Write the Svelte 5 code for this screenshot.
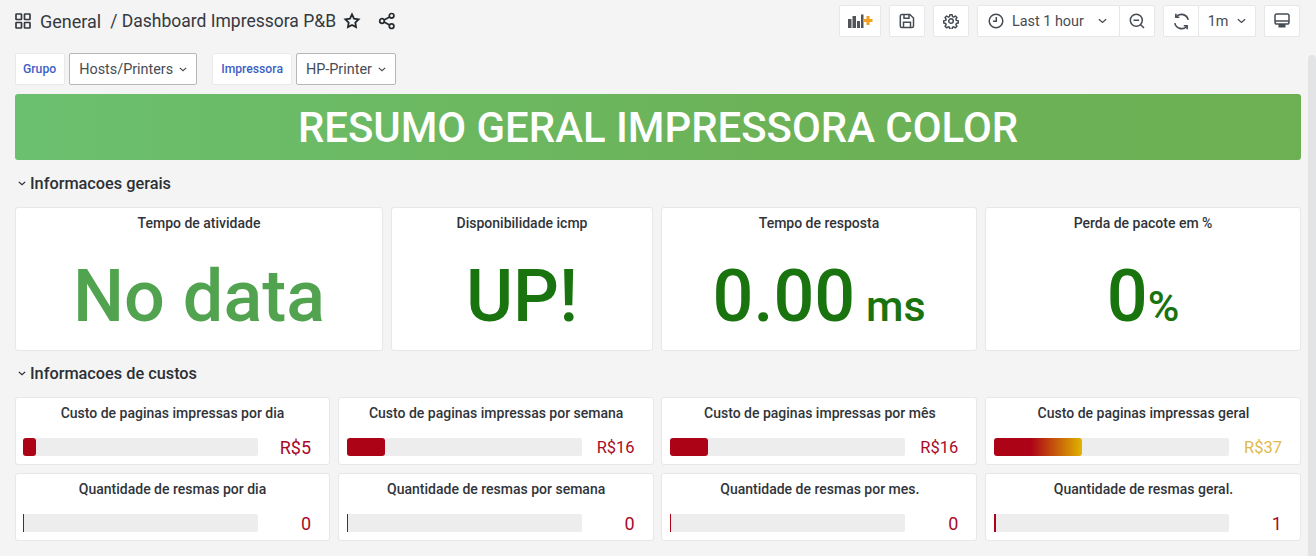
<script>
  const stats = [
    { title: 'Tempo de atividade', value: 'No data', color: '#52a34f' },
    { title: 'Disponibilidade icmp', value: 'UP!', color: '#19730e' },
    { title: 'Tempo de resposta', value: '0.00', unit: ' ms', color: '#19730e' },
    { title: 'Perda de pacote em %', value: '0', unit: '%', color: '#19730e' }
  ];

  const red = '#ad0317';
  const gauges = [
    { title: 'Custo de paginas impressas por dia', value: 'R$5', width: 13, color: red, size: 18 },
    { title: 'Custo de paginas impressas por semana', value: 'R$16', width: 38, color: red, size: 16.500 },
    { title: 'Custo de paginas impressas por mês', value: 'R$16', width: 38, color: red, size: 16.500 },
    { title: 'Custo de paginas impressas geral', value: 'R$37', width: 88, color: 'linear-gradient(90deg, #ad0317 0%, #ad0317 42%, #e0b400 100%)', text: '#e0b94a', size: 16.500 },
    { title: 'Quantidade de resmas por dia', value: '0', width: 1, color: red, size: 18 },
    { title: 'Quantidade de resmas por semana', value: '0', width: 1, color: red, size: 18 },
    { title: 'Quantidade de resmas por mes.', value: '0', width: 1, color: red, size: 18 },
    { title: 'Quantidade de resmas geral.', value: '1', width: 2.500, color: red, size: 18 }
  ];
</script>

<div class="page">
  <header class="topbar">
    <div class="crumbs">
      <svg class="ico grid-ico" viewBox="0 0 16 16" width="16" height="16">
        <rect x="1" y="1" width="5.500" height="5.500" rx=".6" />
        <rect x="9.500" y="1" width="5.500" height="5.500" rx=".6" />
        <rect x="1" y="9.500" width="5.500" height="5.500" rx=".6" />
        <rect x="9.500" y="9.500" width="5.500" height="5.500" rx=".6" />
      </svg>
      <span class="folder">General</span>
      <span class="dash">/ Dashboard Impressora P&amp;B</span>
      <svg class="ico star" viewBox="0 0 24 24" width="18" height="18">
        <path d="M12 3.200l2.700 5.600 6.100.9-4.400 4.300 1 6.100-5.400-2.900-5.400 2.900 1-6.100-4.400-4.300 6.100-.9z" />
      </svg>
      <svg class="ico share" viewBox="0 0 18 18" width="18" height="18">
        <circle cx="13.600" cy="3.800" r="2.300" />
        <circle cx="4" cy="9" r="2.300" />
        <circle cx="13.600" cy="14.200" r="2.300" />
        <path d="M6 7.900l5.600-3M6 10.100l5.600 3" />
      </svg>
    </div>

    <div class="actions">
      <button class="btn add-panel" aria-label="Add panel">
        <svg viewBox="0 0 26 16" width="26" height="16">
          <g fill="#52545c">
            <rect x="1" y="6" width="3.500" height="9" />
            <rect x="5.500" y="3" width="3.500" height="12" />
            <rect x="10" y="8" width="3" height="7" />
            <rect x="14" y="1.500" width="2.500" height="13.500" />
          </g>
          <path d="M21 3v9M16.500 7.500h9" stroke="#f5a01e" stroke-width="3" fill="none" />
        </svg>
      </button>
      <button class="btn square" aria-label="Save">
        <svg class="ico" viewBox="0 0 16 16" width="16" height="16">
          <path d="M2.800 1.500h8l3.700 3.500v8a1.500 1.500 0 0 1-1.500 1.500H2.800a1.500 1.500 0 0 1-1.500-1.500V3a1.500 1.500 0 0 1 1.500-1.500z" />
          <path d="M5 1.800v3.400h5V1.800M4.500 14.300V9.300h7v5" />
        </svg>
      </button>
      <button class="btn square" aria-label="Settings">
        <svg class="ico gear" viewBox="0 0 24 24" width="16" height="16">
          <circle cx="12" cy="12" r="3.400" />
          <path d="M10.300 2.500h3.400l.6 2.900 1.700.7 2.500-1.600 2.400 2.400-1.600 2.500.7 1.700 2.900.6v3.400l-2.900.6-.7 1.700 1.600 2.500-2.400 2.400-2.500-1.600-1.700.7-.6 2.900h-3.400l-.6-2.900-1.700-.7-2.500 1.600-2.400-2.400 1.600-2.500-.7-1.700-2.900-.6v-3.400l2.900-.6.7-1.700-1.600-2.500 2.400-2.400 2.500 1.600 1.700-.7z" />
        </svg>
      </button>
      <div class="btn-group">
        <button class="btn range">
          <svg class="ico" viewBox="0 0 16 16" width="16" height="16">
            <circle cx="8" cy="8" r="6.800" />
            <path d="M8.300 4v4.300H5" />
          </svg>
          <span>Last 1 hour</span>
          <svg class="chev" viewBox="0 0 10 6" width="9" height="6"><path d="M1 1l4 3.600L9 1" /></svg>
        </button>
        <button class="btn square" aria-label="Zoom out">
          <svg class="ico" viewBox="0 0 16 16" width="16" height="16">
            <circle cx="7.300" cy="7.300" r="6" />
            <path d="M4.500 7.300h5.600M11.700 11.700l3.300 3.300" />
          </svg>
        </button>
      </div>
      <div class="btn-group">
        <button class="btn square" aria-label="Refresh">
          <svg class="ico" viewBox="0 0 16 16" width="17" height="17">
            <path d="M14.300 6.500A6.500 6.500 0 0 0 3 3.600M1.700 9.500A6.500 6.500 0 0 0 13 12.400" />
            <path d="M2.700 .8v3.200h3.200M13.300 15.200v-3.200h-3.200" />
          </svg>
        </button>
        <button class="btn interval">
          <span>1m</span>
          <svg class="chev" viewBox="0 0 10 6" width="9" height="6"><path d="M1 1l4 3.600L9 1" /></svg>
        </button>
      </div>
      <button class="btn square tv" aria-label="Cycle view mode">
        <svg class="ico" viewBox="0 0 16 16" width="16" height="16">
          <rect x="1" y="1" width="14" height="10" rx="1.800" />
          <path d="M1 8h14" />
          <rect class="stand" x="4.500" y="11" width="7" height="3.500" />
        </svg>
      </button>
    </div>
  </header>

  <div class="variables">
    <span class="var-label">Grupo</span>
    <button class="var-value">Hosts/Printers <svg class="chev" viewBox="0 0 10 6" width="8" height="5"><path d="M1 1l4 3.600L9 1" /></svg></button>
    <span class="var-label second">Impressora</span>
    <button class="var-value">HP-Printer <svg class="chev" viewBox="0 0 10 6" width="8" height="5"><path d="M1 1l4 3.600L9 1" /></svg></button>
  </div>

  <div class="banner">RESUMO GERAL IMPRESSORA COLOR</div>

  <div class="row-title first">
    <svg class="chev" viewBox="0 0 10 6" width="8" height="5"><path d="M1 1l4 3.600L9 1" /></svg>
    Informacoes gerais
  </div>

  <section class="stats">
    {#each stats as s}
      <article class="panel stat">
        <h3>{s.title}</h3>
        <div class="stat-value" style="color: {s.color}">{s.value}{#if s.unit}<span class="unit">{s.unit}</span>{/if}</div>
      </article>
    {/each}
  </section>

  <div class="row-title">
    <svg class="chev" viewBox="0 0 10 6" width="8" height="5"><path d="M1 1l4 3.600L9 1" /></svg>
    Informacoes de custos
  </div>

  <section class="gauges">
    {#each gauges as g}
      <article class="panel gauge">
        <h3>{g.title}</h3>
        <div class="gauge-row">
          <div class="track">
            <div class="fill" class:thin={g.width < 3} style="width: {g.width}px; background: {g.color}"></div>
          </div>
          <span class="gauge-value" style="color: {g.text || '#a80a28'}; font-size: {g.size}px">{g.value}</span>
        </div>
      </article>
    {/each}
  </section>

  <div class="scrollbar"></div>
</div>

<style>
  :global(body) {
    margin: 0;
    background: #f4f4f4;
    overflow: hidden;
  }

  .page {
    position: relative;
    width: 1316px;
    height: 556px;
    overflow: hidden;
    box-sizing: border-box;
    padding: 0 15px;
    background: #f4f4f4;
    font-family: Roboto, "Liberation Sans", sans-serif;
    color: #24292e;
  }

  button {
    font-family: inherit;
  }

  .ico {
    fill: none;
    stroke: #464c54;
    stroke-width: 1.500;
    flex: none;
  }

  .gear {
    stroke-width: 2.200;
    stroke-linejoin: round;
  }

  .stand {
    fill: #464c54;
    stroke: none;
  }

  .chev {
    fill: none;
    stroke: #464c54;
    stroke-width: 1.500;
    flex: none;
  }

  .topbar {
    display: flex;
    align-items: center;
    justify-content: space-between;
    height: 42px;
  }

  .crumbs {
    display: flex;
    align-items: center;
    font-size: 18px;
    color: #35393f;
  }

  .grid-ico {
    stroke: #35393f;
    stroke-width: 1.700;
  }

  .folder {
    margin-left: 9px;
  }

  .dash {
    margin-left: 9px;
    font-size: 17.500px;
  }

  .star {
    margin-left: 7px;
    stroke: #24292e;
    stroke-width: 2.400;
  }

  .share {
    margin-left: 17px;
    stroke: #24292e;
    stroke-width: 1.700;
  }

  .actions {
    display: flex;
    align-items: center;
    margin-right: 1px;
  }

  .btn {
    display: flex;
    align-items: center;
    justify-content: center;
    height: 32px;
    box-sizing: border-box;
    padding: 0;
    background: #fff;
    border: 1px solid #e6e7e8;
    border-radius: 2px;
    color: #464c54;
    font-size: 14.400px;
  }

  .square {
    width: 36px;
  }

  .add-panel {
    width: 42px;
    margin-right: 8px;
  }

  .actions > .square {
    margin-right: 8px;
  }

  .actions > .tv {
    margin: 0 0 0 8px;
    width: 36px;
  }

  .btn-group {
    display: flex;
    margin-right: 8px;
  }

  .btn-group:last-of-type {
    margin-right: 0;
  }

  .btn-group .btn + .btn {
    margin-left: -1px;
  }

  .range {
    width: 143px;
    justify-content: flex-start;
    padding-left: 10px;
  }

  .range span {
    margin-left: 8px;
    margin-right: 14px;
  }

  .interval {
    width: 58px;
    gap: 9px;
  }

  .variables {
    display: flex;
    align-items: center;
    margin-top: 11px;
    height: 32px;
  }

  .var-label {
    display: flex;
    align-items: center;
    height: 32px;
    box-sizing: border-box;
    padding: 0 8px 0 7px;
    background: #fff;
    border: 1px solid #e8e9ea;
    border-radius: 2px;
    color: #3d5fc4;
    font-size: 12.200px;
    font-weight: 500;
  }

  .var-label.second {
    margin-left: 15px;
    padding-left: 8px;
  }

  .var-value {
    display: flex;
    align-items: center;
    gap: 6px;
    height: 32px;
    margin-left: 4px;
    box-sizing: border-box;
    padding: 0 9px;
    background: #fff;
    border: 1px solid #b5b7ba;
    border-radius: 2px;
    color: #464c54;
    font-size: 14.400px;
  }

  .banner {
    display: flex;
    align-items: center;
    justify-content: center;
    width: 1286px;
    height: 66px;
    margin-top: 9px;
    border-radius: 3px;
    background: linear-gradient(90deg, #6bc06f 0%, #6cb257 60%, #6db054 100%);
    color: #fff;
    font-size: 41.900px;
    font-weight: 500;
  }

  .row-title {
    display: flex;
    align-items: center;
    gap: 4px;
    height: 22px;
    margin: 11px 0 13px 3px;
    font-size: 16.300px;
    font-weight: 500;
    color: #2c3036;
  }

  .row-title.first {
    margin-top: 12px;
  }

  .row-title .chev {
    stroke: #24292e;
  }

  .panel {
    box-sizing: border-box;
    background: #fff;
    border: 1px solid #e6e7e8;
    border-radius: 3px;
  }

  .panel h3 {
    margin: 0;
    text-align: center;
    font-size: 14px;
    font-weight: 500;
    line-height: 16px;
    color: #30343a;
  }

  .stats {
    display: grid;
    grid-template-columns: 368px 262px 316px 316px;
    gap: 8px;
    width: 1286px;
  }

  .stat {
    height: 144px;
    padding-top: 7px;
  }

  .stat-value {
    text-align: center;
    font-size: 72px;
    font-weight: 500;
    line-height: 84px;
    margin-top: 24px;
  }

  .unit {
    font-size: 43px;
  }

  .gauges {
    display: grid;
    grid-template-columns: 315px 316px 316px 316px;
    column-gap: 7.670px;
    row-gap: 8px;
    width: 1286px;
  }

  .gauge {
    height: 68px;
    padding: 7px 7px 0 8px;
  }

  .gauge:nth-child(4n + 1) {
    padding-left: 7px;
  }

  .gauge-row {
    display: flex;
    align-items: center;
    margin-top: 17px;
    height: 18px;
  }

  .track {
    width: 235px;
    height: 18px;
    border-radius: 2px;
    background: #ededed;
    flex: none;
  }

  .fill {
    height: 18px;
    border-radius: 3px;
  }

  .fill.thin {
    border-radius: 0;
  }

  .gauge-value {
    flex: 1;
    text-align: right;
    padding-right: 11px;
  }

  .scrollbar {
    position: absolute;
    top: 55px;
    right: 0;
    width: 8px;
    height: 501px;
    border-radius: 4px 4px 0 0;
    background: #e3e4e5;
  }
</style>
